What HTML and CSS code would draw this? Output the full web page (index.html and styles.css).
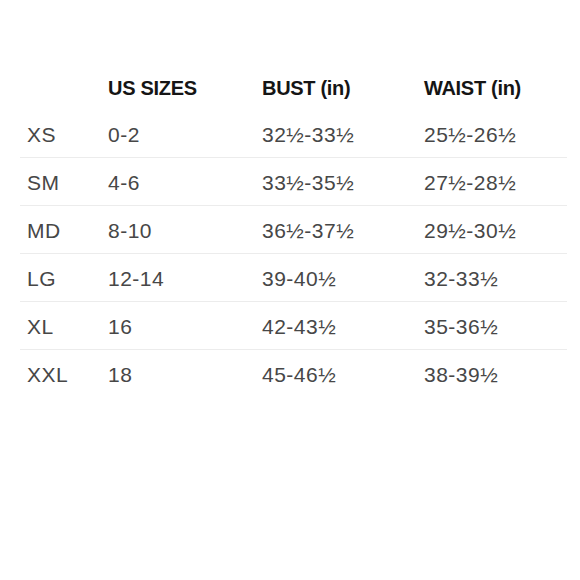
FILE: index.html
```html
<!DOCTYPE html>
<html>
<head>
<meta charset="utf-8">
<link rel="stylesheet" href="styles.css">
</head>
<body>
<div class="chart">
  <div class="row head">
    <div></div>
    <div>US SIZES</div>
    <div>BUST (in)</div>
    <div>WAIST (in)</div>
  </div>
  <div class="row"><div>XS</div><div>0-2</div><div>32½-33½</div><div>25½-26½</div></div>
  <div class="row"><div>SM</div><div>4-6</div><div>33½-35½</div><div>27½-28½</div></div>
  <div class="row"><div>MD</div><div>8-10</div><div>36½-37½</div><div>29½-30½</div></div>
  <div class="row"><div>LG</div><div>12-14</div><div>39-40½</div><div>32-33½</div></div>
  <div class="row"><div>XL</div><div>16</div><div>42-43½</div><div>35-36½</div></div>
  <div class="row last"><div>XXL</div><div>18</div><div>45-46½</div><div>38-39½</div></div>
</div>
</body>
</html>
```
FILE: styles.css
```css
html, body {
  margin: 0;
  background: #ffffff;
}
body {
  padding-top: 66px;
  font-family: "Liberation Sans", Arial, sans-serif;
}
.chart {
  margin-left: 20px;
  width: 547px;
}
.row {
  display: grid;
  grid-template-columns: 81px 154px 162px 1fr;
  padding-left: 7px;
  padding-top: 2px;
  height: 45px;
  align-items: center;
  border-bottom: 1px solid #ececec;
  font-size: 21px;
  letter-spacing: 0.5px;
  color: #474747;
}
.row.head {
  height: 44px;
  padding-top: 0;
  border-bottom: none;
  color: #151515;
  font-size: 20px;
  font-weight: bold;
  letter-spacing: -0.3px;
}
.row.last {
  border-bottom: none;
}
```
